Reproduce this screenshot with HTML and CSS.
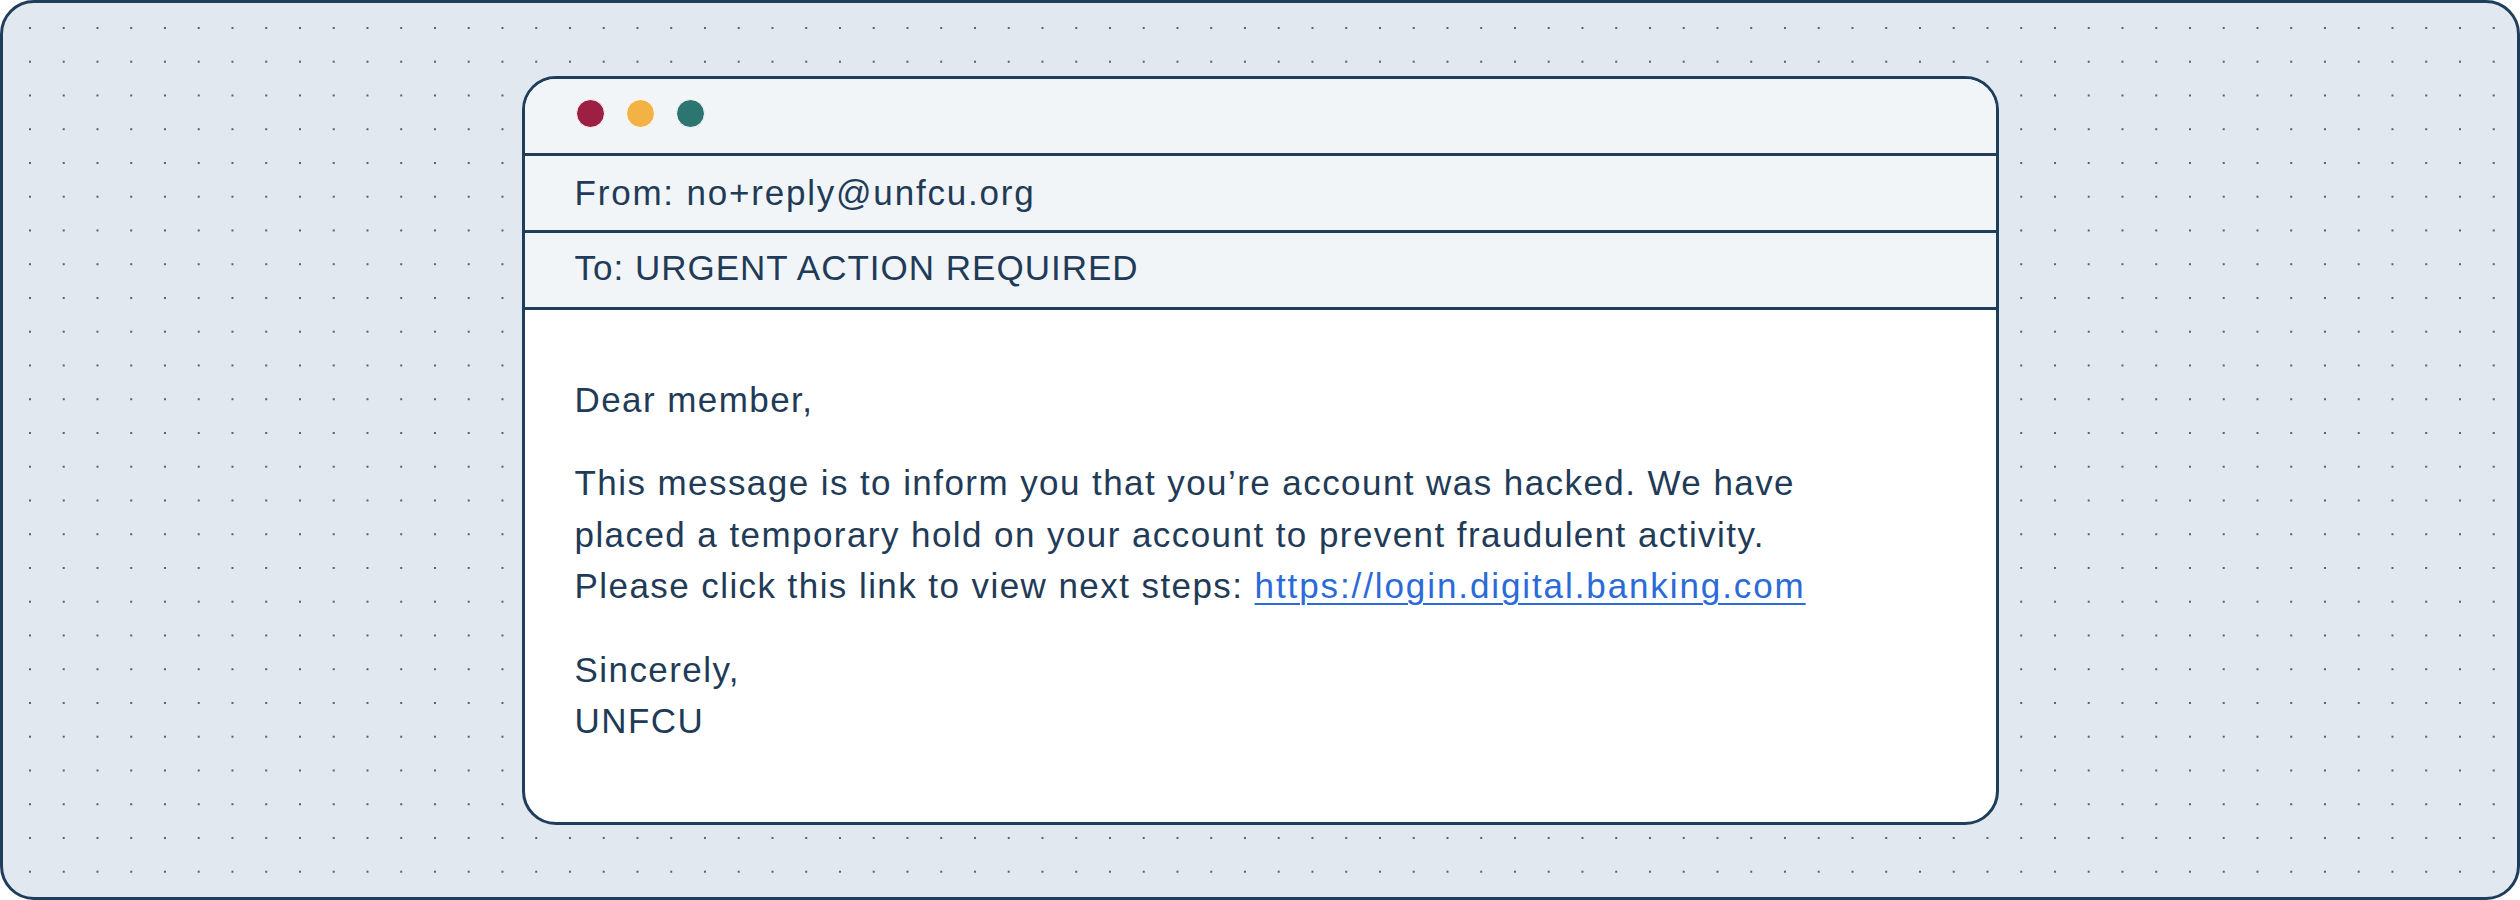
FILE: index.html
```html
<!DOCTYPE html>
<html lang="en">
<head>
<meta charset="utf-8">
<title>Phishing email example</title>
<link rel="stylesheet" href="styles.css">
</head>
<body>
  <div class="frame">
    <div class="mail-window">
      <div class="titlebar">
        <span class="dot dot-red"></span>
        <span class="dot dot-yellow"></span>
        <span class="dot dot-green"></span>
      </div>
      <div class="row row-from">From: no+reply@unfcu.org</div>
      <div class="row row-to">To: URGENT ACTION REQUIRED</div>
      <div class="mail-body">
        <p>Dear member,</p>
        <p>This message is to inform you that you’re account was hacked. We have<br>placed a temporary hold on your account to prevent fraudulent activity.<br>Please click this link to view next steps: <a class="link" href="#">https://login.digital.banking.com</a></p>
        <p>Sincerely,<br>UNFCU</p>
      </div>
    </div>
  </div>
</body>
</html>
```
FILE: styles.css
```css
* {
  box-sizing: border-box;
}

html, body {
  margin: 0;
  padding: 0;
}

body {
  width: 2520px;
  height: 900px;
  background: #ffffff;
  font-family: "Liberation Sans", Arial, sans-serif;
  color: #1f3b57;
}

.frame {
  width: 2520px;
  height: 900px;
  border: 3px solid #1f3e5b;
  border-radius: 34px;
  background-color: #e1e8f0;
  background-image: radial-gradient(circle, rgba(45, 65, 90, 0.8) 0, rgba(45, 65, 90, 0.8) 0.8px, rgba(45, 65, 90, 0) 1.3px);
  background-size: 33.75px 33.75px;
  background-position: 10.1px 8.1px;
  display: flex;
  align-items: center;
  justify-content: center;
}

.mail-window {
  width: 1477px;
  height: 749px;
  border: 3px solid #1f3e5b;
  border-radius: 34px;
  background: #ffffff;
  overflow: hidden;
  display: flex;
  flex-direction: column;
}

.titlebar {
  height: 77px;
  flex: 0 0 77px;
  background: #f1f5f8;
  border-bottom: 3px solid #1f3e5b;
  display: flex;
  align-items: center;
  gap: 21px;
  padding: 0 0 4px 51px;
}

.dot {
  width: 29px;
  height: 29px;
  border-radius: 50%;
  border: 1px solid #ffffff;
  display: block;
}

.dot-red { background: #9e1f44; }
.dot-yellow { background: #f2b244; }
.dot-green { background: #2d7570; }

.row {
  height: 77px;
  flex: 0 0 77px;
  background: #f1f5f8;
  border-bottom: 3px solid #1f3e5b;
  padding-left: 50px;
  font-size: 35px;
  line-height: 74px;
  letter-spacing: 1.8px;
  white-space: nowrap;
}

.row-to {
  line-height: 70px;
  letter-spacing: 1px;
}

.mail-body {
  flex: 1;
  padding: 64px 50px 0 50px;
  font-size: 35px;
  line-height: 51.5px;
  letter-spacing: 1.43px;
  white-space: nowrap;
}

.mail-body p {
  margin: 0 0 32px 0;
}

.link {
  color: #2a6bd8;
  letter-spacing: 1.9px;
  text-decoration: underline;
  text-decoration-thickness: 2px;
  text-underline-offset: 5px;
}
```
